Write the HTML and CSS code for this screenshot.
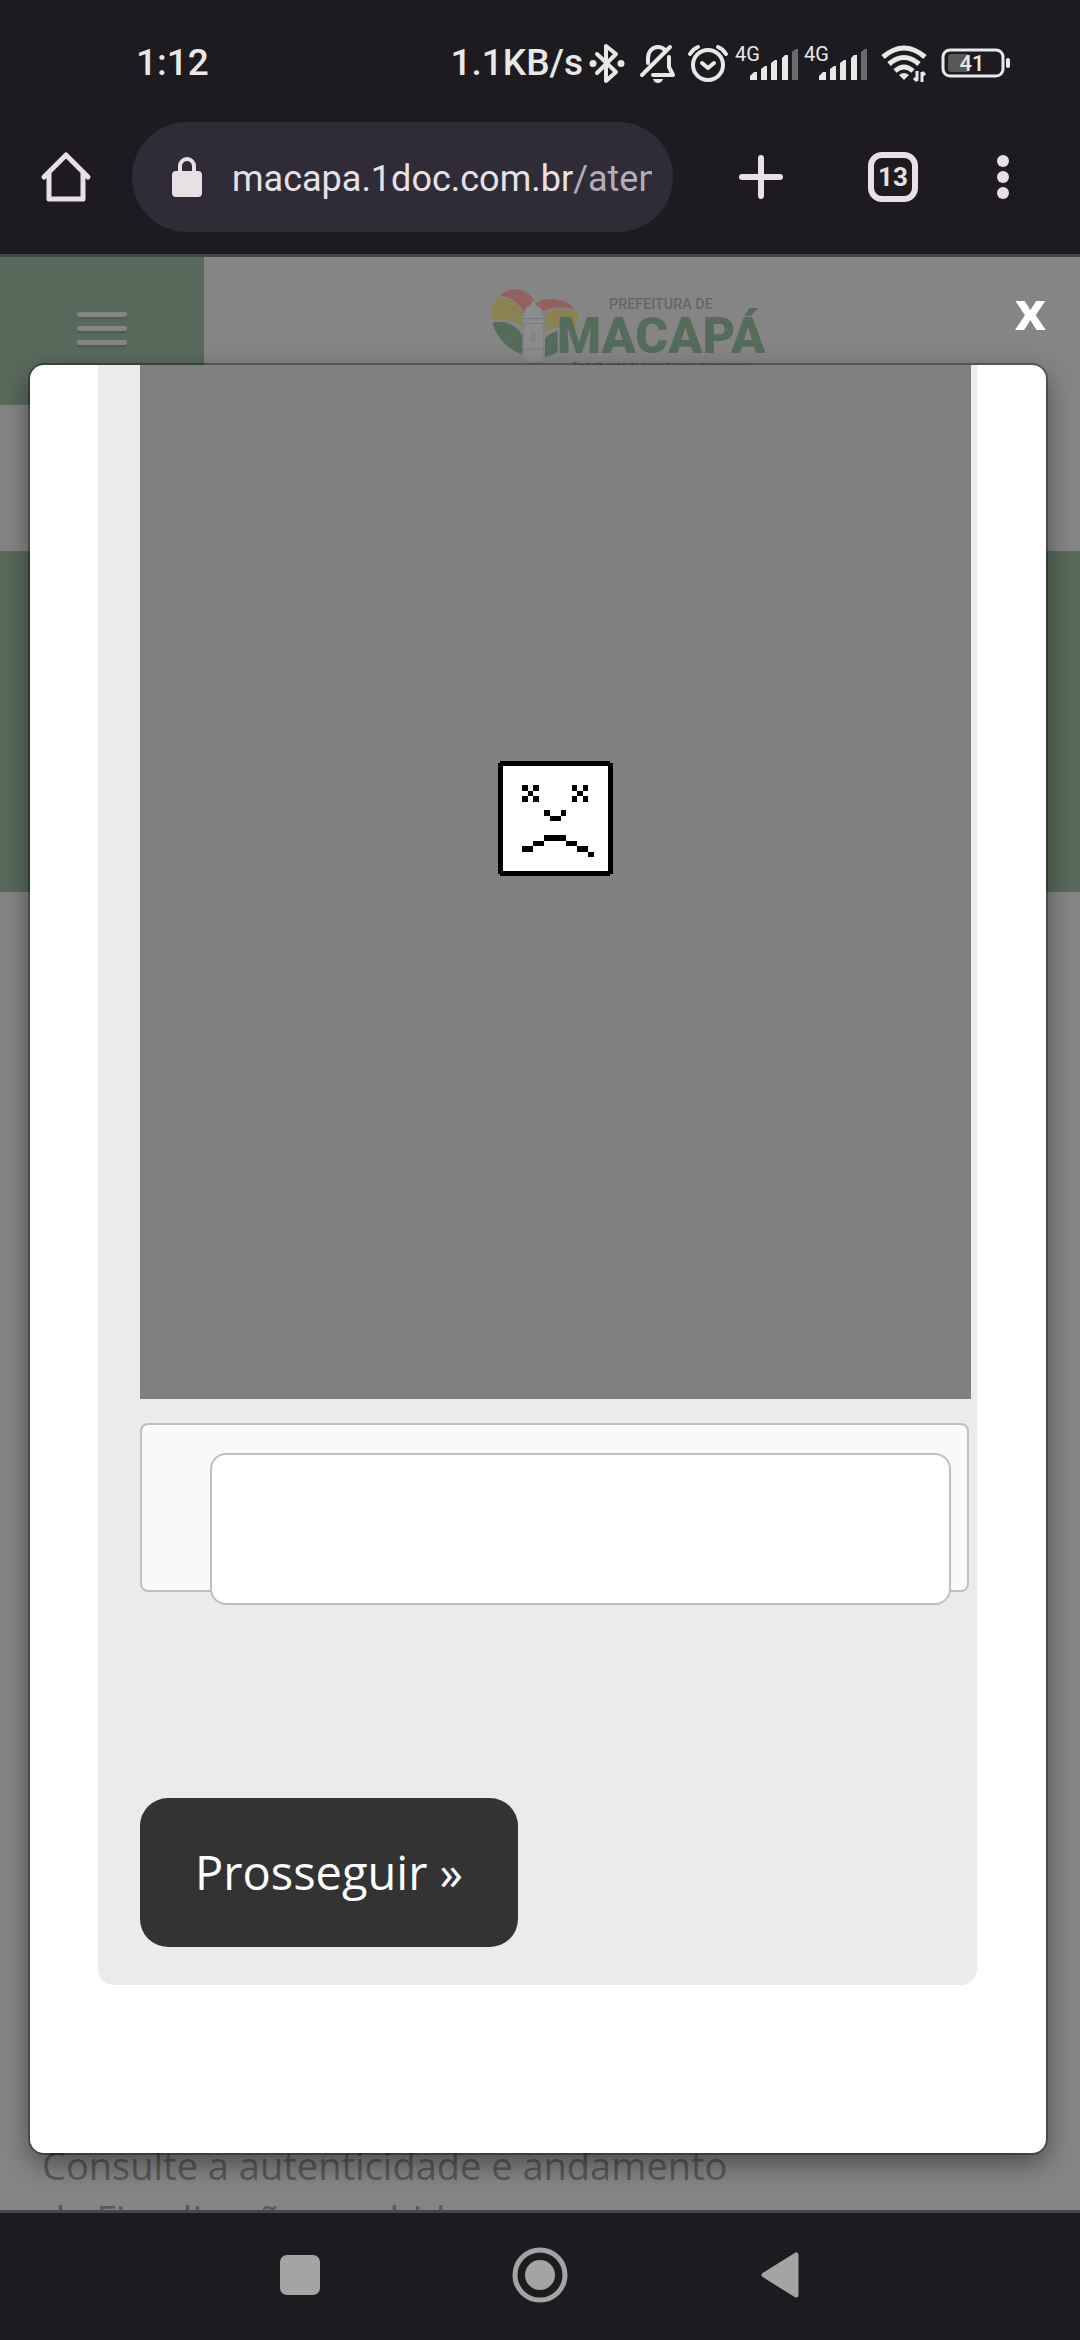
FILE: index.html
```html
<!DOCTYPE html>
<html lang="pt-BR">
<head>
<meta charset="utf-8">
<meta name="viewport" content="width=device-width, initial-scale=1">
<title>Prefeitura de Macapá</title>
<link rel="stylesheet" href="styles.css">
</head>
<body>
<div class="phone">
  <div class="status">
    <span class="clock">1:12</span>
    <div class="indicators">
      <span>1.1KB/s</span>
      <svg class="ic-bt" viewBox="0 0 36 40" width="36" height="40" fill="none" stroke="#e8e8e8" stroke-width="4" stroke-linecap="round" stroke-linejoin="round"><path d="M8 11l19 18-10 9V3l10 8L8 30"/><g fill="#e8e8e8" stroke="none"><circle cx="4" cy="20.500" r="3.500"/><circle cx="32" cy="20.500" r="3.500"/></g></svg>
      <svg class="ic-bell" viewBox="0 0 36 40" width="36" height="40" fill="none" stroke="#e8e8e8" stroke-width="4" stroke-linecap="round" stroke-linejoin="round"><path d="M8 20v-5c0-6 4-11 10-11 3 0 5 1 7 3M29 14v10l4 8H13M2 32L30 4"/><path d="M13 36h10c-1 3-3 4-5 4s-4-1-5-4z" fill="#e8e8e8" stroke="none"/></svg>
      <svg class="ic-alarm" viewBox="0 0 40 40" width="40" height="40" fill="none" stroke="#e8e8e8" stroke-width="4" stroke-linecap="round" stroke-linejoin="round"><circle cx="20" cy="22" r="15"/><path d="M2 11q3-5 8-7M38 11q-3-5-8-7M14 20l6 5 6-5"/></svg>
      <svg class="ic-signal" viewBox="0 0 64 36" width="64" height="36"><text class="net" x="0" y="16">4G</text><g fill="#e8e8e8"><path d="M15 35v-4l4-4h3v8zM26 35V24l4-3h2v14zM36 35V18l4-3h2v20zM47 35V13l3-3h3v25z"/><path fill="#6b6b6e" d="M57 35V7l4-3h2v31z"/></g></svg>
      <svg class="ic-signal" viewBox="0 0 64 36" width="64" height="36"><text class="net" x="0" y="16">4G</text><g fill="#e8e8e8"><path d="M15 35v-4l4-4h3v8zM26 35V24l4-3h2v14zM36 35V18l4-3h2v20zM47 35V13l3-3h3v25z"/><path fill="#6b6b6e" d="M57 35V7l4-3h2v31z"/></g></svg>
      <svg class="ic-wifi" viewBox="0 0 46 38" width="46" height="38" fill="none" stroke="#e8e8e8" stroke-width="5"><path d="M2 13q21-18 42 0M8 20q15-13 30 0M14 27q9-8 18 0"/><path d="M18 31q5-4 10 0l-5 5z" fill="#e8e8e8" stroke="none"/><path d="M36 27v10M41 28v10M36 37l-3-3M41 28l3 3" stroke-width="3"/></svg>
      <svg class="ic-battery" viewBox="0 0 70 32" width="70" height="32"><rect x="2" y="3" width="60" height="26" rx="7" fill="none" stroke="#e8e8e8" stroke-width="3"/><rect x="7" y="7" width="21" height="18" rx="3" fill="#58585a"/><rect x="65" y="11" width="4" height="10" rx="2" fill="#e8e8e8"/><text class="charge" x="31" y="24" text-anchor="middle">41</text></svg>
    </div>
  </div>

  <div class="toolbar">
    <button class="tool home" aria-label="Página inicial"><svg viewBox="0 0 50 52" width="50" height="52" fill="none" stroke="#e7e1e6" stroke-width="5" stroke-linecap="round" stroke-linejoin="round"><path d="M3 26L25 4l22 22M8 22v26h34V22"/></svg></button>
    <div class="address">
      <svg viewBox="0 0 30 40" width="30" height="40"><rect y="14" width="30" height="26" rx="4" fill="#e7e1e6"/><path d="M8 16V9a7 7 0 0 1 14 0v7" fill="none" stroke="#e7e1e6" stroke-width="4"/></svg>
      <a class="url" href="#">macapa.1doc.com.br<span>/atendimento</span></a>
    </div>
    <button class="tool" aria-label="Nova guia"><svg viewBox="0 0 44 44" width="44" height="44" stroke="#e7e1e6" stroke-width="6" stroke-linecap="round"><path d="M3 22h38M22 3v38"/></svg></button>
    <button class="tool tabs">13</button>
    <button class="tool more" aria-label="Menu"><svg viewBox="0 0 12 44" width="12" height="44" fill="#e7e1e6"><circle cx="6" cy="6" r="6"/><circle cx="6" cy="22" r="6"/><circle cx="6" cy="38" r="6"/></svg></button>
  </div>

  <main class="viewport">
    <div class="page">
      <header class="site-header">
        <button class="menu" aria-label="Abrir menu"><i></i><i></i><i></i></button>
        <svg class="logo" viewBox="62 48 822 240" width="274" height="80">
          <path fill="#93615f" d="M90 78C112 50 160 48 190 88L196 102C222 78 285 82 314 118C270 108 240 112 222 124L160 128C145 98 120 80 90 78z"/>
          <path fill="#8a834f" d="M64 150C60 118 70 94 84 84C116 82 144 100 158 134V172C128 148 96 142 64 150zM224 186V134C250 112 290 112 318 126C324 144 320 160 314 172H264C246 174 234 180 224 186z"/>
          <path fill="#556c5b" d="M66 158C98 150 134 160 156 194V254C110 236 78 200 66 158zM224 262V206C240 190 250 186 262 184V246C250 254 238 258 224 262z"/>
          <path fill="#8c8c8c" stroke="#777b7b" stroke-width="2" d="M184 94h10l3 12c12 4 20 14 22 30h4v24h-4v84c8 8 4 34-30 36-34-2-38-28-30-36v-84h-4v-24h4c2-16 10-26 22-30z"/>
          <path fill="none" stroke="#777b7b" stroke-width="3" d="M156 146h66M158 160h62M158 238h62M184 190h9v24h-9z"/>
          <text class="logo-small" x="416" y="118">PREFEITURA DE</text>
          <text class="logo-big" x="260" y="249">MACAPÁ</text>
          <text class="logo-tag" x="305" y="298">Trabalhando de coração pelo nosso povo</text>
        </svg>
      </header>
      <div class="band"></div>
      <p class="blurb">Consulte a autenticidade e andamento<br>da Fiscalização recebida</p>
    </div>

    <div class="overlay">
      <button class="close" aria-label="Fechar">x</button>
      <section class="dialog" role="dialog">
        <form class="panel">
          <div class="frame">
            <svg viewBox="54 63 345 345" width="115" height="115" shape-rendering="crispEdges"><path d="M60 63h330v6h9v333h-9v6H60v-6h-6V69h6z"/><path fill="#fff" d="M69 78h315v315H69z"/><path d="M126 135h18v18h-18zM159 135h18v18h-18zM144 153h15v15h-15zM126 168h18v18h-18zM159 168h18v18h-18zM276 135h15v18h-15zM309 135h15v18h-15zM291 153h18v15h-18zM276 168h15v18h-15zM309 168h15v18h-15zM192 210h18v18h-18zM243 210h15v18h-15zM210 228h33v15h-33zM192 285h66v18h-66zM159 303h33v15h-33zM258 303h33v15h-33zM126 318h33v18h-33zM291 318h33v18h-33zM324 336h18v15h-18z"/></svg>
          </div>
          <div class="field"><input type="text" aria-label="Resposta"></div>
          <button class="submit" type="button">Prosseguir »</button>
        </form>
      </section>
    </div>
  </main>

  <nav class="navbar">
    <button aria-label="Recentes"><svg viewBox="0 0 40 40" width="40" height="40"><rect width="40" height="40" rx="7" fill="#a4a4a4"/></svg></button>
    <button aria-label="Início"><svg viewBox="0 0 56 56" width="56" height="56"><circle cx="28" cy="28" r="25" fill="none" stroke="#a4a4a4" stroke-width="5"/><circle cx="28" cy="28" r="15" fill="#a4a4a4"/></svg></button>
    <button aria-label="Voltar"><svg viewBox="0 0 38 46" width="38" height="46"><path d="M3 23L35 3v40z" fill="#a4a4a4" stroke="#a4a4a4" stroke-width="5" stroke-linejoin="round"/></svg></button>
  </nav>
</div>
</body>
</html>
```
FILE: styles.css
```css
* { box-sizing: border-box; }
body { margin: 0; background: #1d1b20; font-family: "Open Sans", sans-serif; }
button { border: 0; padding: 0; background: none; color: inherit; font: inherit; }
svg { display: block; flex: none; overflow: visible; }

.phone { display: flex; flex-direction: column; height: 100vh; }

.status {
  display: flex;
  justify-content: space-between;
  align-items: center;
  height: 102px;
  padding: 24px 69px 0 136px;
  color: #e8e8e8;
  font: 500 37px/40px Roboto, sans-serif;
}
.indicators { display: flex; align-items: center; }
.ic-bt { margin-left: 6px; }
.ic-bell { margin-left: 15px; }
.ic-alarm { margin: 0 7px 0 12px; }
.ic-signal { margin-right: 5px; }
.ic-wifi { margin: 0 14px 0 8px; }
.net { font: 400 20px Roboto, sans-serif; fill: #e8e8e8; }
.charge { font: 500 22px Roboto, sans-serif; fill: #e8e8e8; }

.toolbar {
  display: flex;
  align-items: center;
  height: 155px;
  padding: 0 33px 2px 0;
  border-bottom: 3px solid #47464c;
  color: #e7e1e6;
  font-family: Roboto, sans-serif;
}
.tool { display: flex; flex: none; justify-content: center; align-items: center; width: 132px; }
.more { width: 88px; }
.address {
  display: flex;
  flex: 1;
  align-items: center;
  gap: 30px;
  min-width: 0;
  height: 110px;
  margin-right: 22px;
  padding: 0 21px 0 40px;
  border-radius: 55px;
  background: #2f2c37;
}
.url { flex: 1; overflow: hidden; padding-top: 3px; color: inherit; font-size: 36px; line-height: 48px; white-space: nowrap; text-decoration: none; }
.url span { color: #b3aeb8; }
.tabs { width: 50px; height: 50px; margin: 0 41px; border: 6px solid #e7e1e6; border-radius: 14px; font-size: 26px; font-weight: 700; line-height: 38px; }

.viewport { position: relative; flex: 1; min-height: 0; overflow: hidden; background: #858585; }
.site-header { display: flex; height: 294px; }
.menu { display: flex; flex-direction: column; align-items: center; gap: 9px; width: 204px; height: 148px; padding-top: 55px; background: #586a5c; }
.menu i { width: 50px; height: 5px; border-radius: 3px; background: #858585; box-shadow: 0 2px 2px #4d5d51; }
.logo { margin: 29px auto 0 287px; }
.logo-small { font: 500 43px Roboto, sans-serif; fill: #666; }
.logo-big { font: 900 151px Roboto, sans-serif; fill: #556c5b; }
.logo-tag { font: 500 29px Roboto, sans-serif; fill: #666; }
.band { height: 341px; background: #586a5c; }
.blurb { margin: 1246px 42px 0; color: #595959; font-size: 38px; line-height: 54px; }

.overlay { position: absolute; inset: 0; display: flex; flex-direction: column; padding: 0 34px 57px 30px; }
.close { align-self: flex-end; height: 108px; padding-bottom: 4px; color: #fff; font-size: 54px; font-weight: 700; line-height: 74px; }
.dialog {
  display: flex;
  flex: 1;
  flex-direction: column;
  padding: 0 69px 168px 68px;
  border-radius: 14px;
  background: #fff;
  box-shadow: 0 0 0 2px rgba(0, 0, 0, .3), 0 10px 28px rgba(0, 0, 0, .45);
}
.panel { display: flex; flex: 1; flex-direction: column; padding: 0 6px 38px 42px; border-radius: 0 0 16px 16px; background: #ebebeb; }
.frame { display: flex; flex: 1; justify-content: center; align-items: center; padding-bottom: 127px; background: #808080; }
.field { height: 169px; margin: 24px 2px 206px 0; padding: 28px 16px 0 68px; border: 2px solid #bfbfbf; border-radius: 8px; background: #f9f9f9; }
.field input { display: block; width: 100%; height: 152px; padding: 0 24px; border: 2px solid #bfbfbf; border-radius: 16px; background: #fff; font: 47px "Open Sans", sans-serif; }
.submit { align-self: flex-start; height: 149px; padding: 0 55px 2px; border-radius: 28px; background: #333; color: #fff; font-size: 47px; line-height: 64px; }

.navbar { display: flex; justify-content: center; height: 130px; padding-bottom: 3px; border-top: 3px solid #47464c; }
.navbar button { display: flex; justify-content: center; align-items: center; width: 240px; }
```
